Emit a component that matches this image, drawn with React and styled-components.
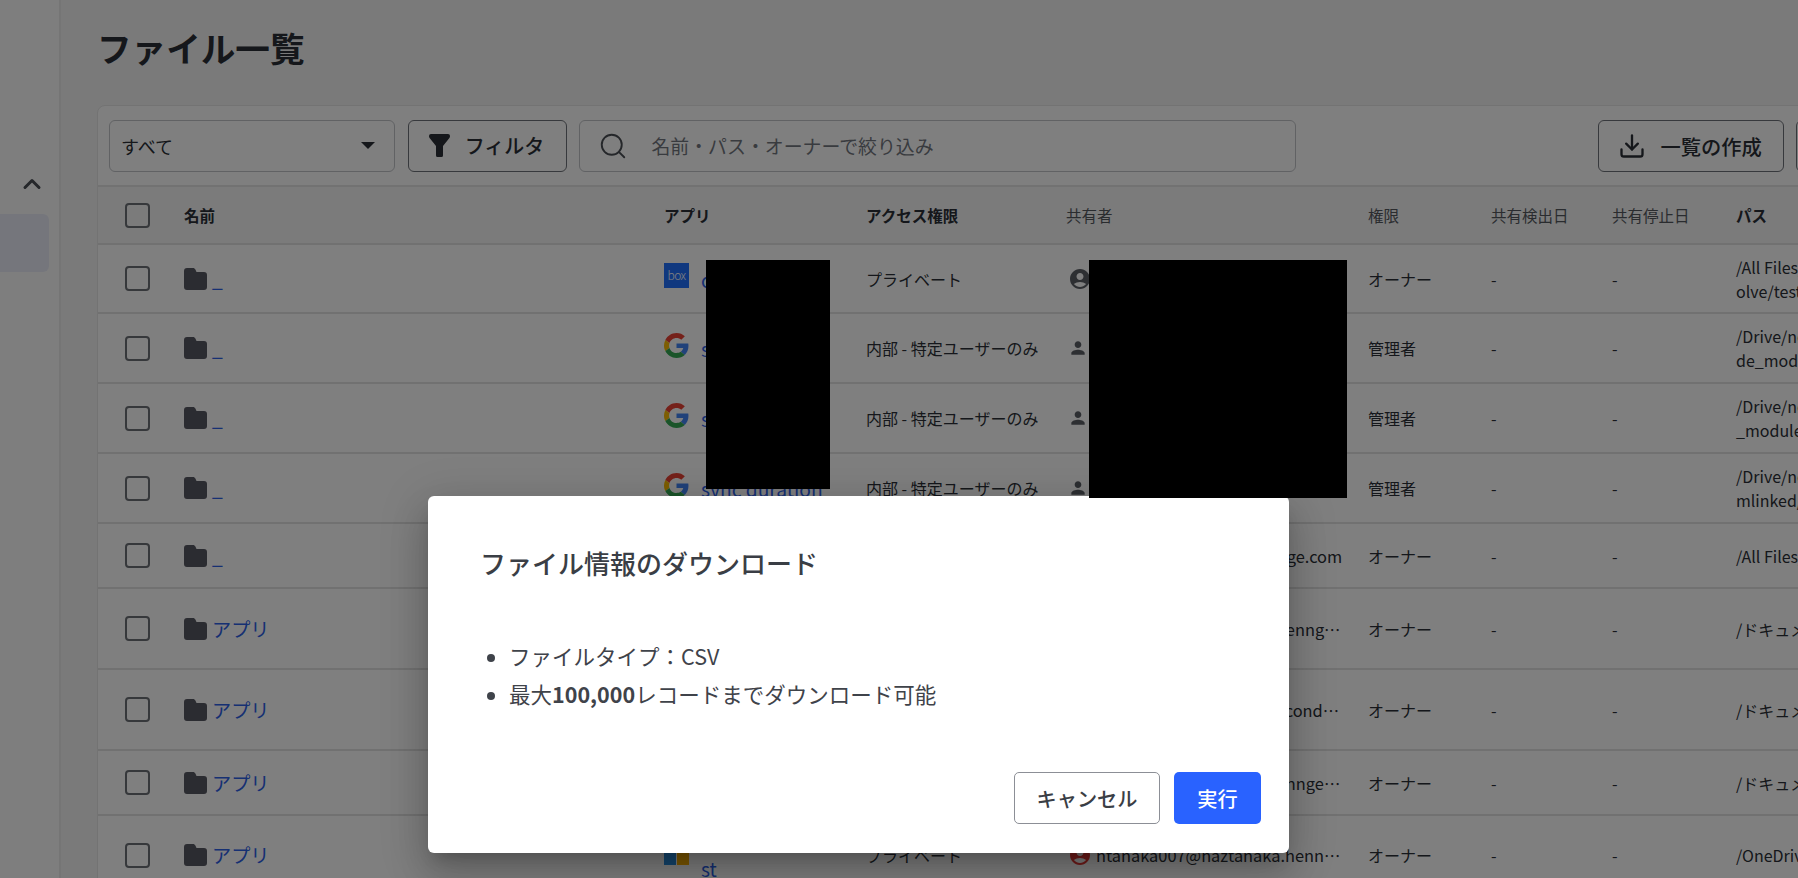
import React from "react";
import styled, { createGlobalStyle } from "styled-components";
import { ChevronUp, Search, Download } from "lucide-react";

const GlobalStyle = createGlobalStyle`
  html, body {
    margin: 0;
    height: 100%;
    overflow: hidden;
    background: #f5f5f5;
    font-family: "Noto Sans CJK JP", "Noto Sans", sans-serif;
    color: #2b2f36;
  }
  * { box-sizing: border-box; }
`;

const Page = styled.div`
  position: relative;
  display: flex;
  width: 1798px;
  height: 878px;
  overflow: hidden;
`;

const Sidebar = styled.aside`
  flex: 0 0 61px;
  padding-top: 170px;
  background: #fdfdfd;
  border-right: 2px solid #ebebeb;
`;

const Collapse = styled.div`
  display: flex;
  justify-content: center;
  padding-left: 5px;
  height: 44px;
  color: #4a4e55;
`;

const SideItem = styled.div`
  width: 49px;
  height: 58px;
  background: #eaedf8;
  border-radius: 0 6px 6px 0;
`;

const Main = styled.main`
  flex: 1;
  min-width: 0;
  padding: 0 0 0 36px;
`;

const Title = styled.h1`
  margin: 0;
  height: 105px;
  padding: 23px 0 0;
  font-size: 34.6px;
  line-height: 48px;
  font-weight: 700;
`;

const Card = styled.section`
  width: 1800px;
  background: #fff;
  border: 1px solid #e6e6e6;
  border-radius: 8px 0 0 0;
`;

const Toolbar = styled.div`
  display: flex;
  align-items: center;
  height: 81px;
  padding: 0 0 0 11px;
  border-bottom: 2px solid #e4e4e4;
`;

const SelectBox = styled.div`
  display: flex;
  align-items: center;
  justify-content: space-between;
  width: 286px;
  height: 52px;
  padding: 0 19px 0 11px;
  margin-right: 13px;
  border: 1.5px solid #c2c4c9;
  border-radius: 6px;
  font-size: 18px;
`;

const Caret = styled.span`
  width: 0;
  height: 0;
  border-left: 7px solid transparent;
  border-right: 7px solid transparent;
  border-top: 7px solid #2b2f36;
`;

const ToolButton = styled.button`
  display: flex;
  align-items: center;
  gap: ${(p) => p.$gap}px;
  width: ${(p) => p.$width}px;
  height: 52px;
  margin-right: ${(p) => p.$mr}px;
  padding: 0 0 0 ${(p) => p.$pl}px;
  background: #fff;
  border: 1.5px solid #6f737a;
  border-radius: 6px;
  font-family: inherit;
  font-size: ${(p) => p.$size}px;
  font-weight: 500;
  color: #2b2f36;
`;

const SearchBox = styled.div`
  display: flex;
  align-items: center;
  gap: 23px;
  width: 718px;
  height: 52px;
  margin-right: 302px;
  padding-left: 18px;
  border: 1.5px solid #c2c4c9;
  border-radius: 6px;
  color: #73777e;
  font-size: 18.9px;
  svg {
    flex: none;
    color: #4a4e55;
  }
`;

const Row = styled.div`
  display: grid;
  grid-template-columns: 86px 480px 202px 200px 302px 123px 121px 124px 400px;
  align-items: center;
  height: ${(p) => p.$h}px;
  background: ${(p) => (p.$head ? "#f6f6f6" : "#fff")};
  border-bottom: 2px solid #e2e2e2;
  font-size: 16px;
`;

const CheckCell = styled.div`
  padding-left: 27px;
  display: flex;
`;

const Check = styled.span`
  width: 25px;
  height: 25px;
  border: 2.5px solid #6c7076;
  border-radius: 4px;
`;

const HeadCell = styled.div`
  font-size: 15.5px;
  font-weight: ${(p) => (p.$bold ? 700 : 400)};
  color: ${(p) => (p.$bold ? "#2b2f36" : "#55595f")};
  white-space: nowrap;
`;

const NameCell = styled.div`
  display: flex;
  align-items: center;
  gap: 5px;
`;

const FileLink = styled.a`
  color: #2c60e6;
  font-size: 19.2px;
  line-height: 26px;
  white-space: pre-line;
`;

const AppCell = styled.div`
  display: flex;
  align-items: center;
  gap: 12px;
  ${FileLink} {
    margin-top: 2px;
  }
`;

const AppLogo = styled.span`
  flex: 0 0 25px;
  display: flex;
  width: 25px;
  height: 25px;
  margin-bottom: 6px;
`;

const BoxLogo = styled(AppLogo)`
  align-items: center;
  justify-content: center;
  background: #2070ff;
  color: #fff;
  font-size: 12px;
  font-weight: 300;
  padding-bottom: 3px;
  letter-spacing: -0.5px;
`;

const MsLogo = styled(AppLogo)`
  display: grid;
  grid-template-columns: 1fr 1fr;
  grid-template-rows: 1fr 1fr;
  gap: 1.5px;
  span:nth-child(1) { background: #e64a19; }
  span:nth-child(2) { background: #4caf50; }
  span:nth-child(3) { background: #2b8fe0; }
  span:nth-child(4) { background: #ffb300; }
`;

const SharerCell = styled.div`
  display: flex;
  align-items: center;
  gap: 4px;
  padding-left: 2px;
  min-width: 0;
`;

const SharerIcon = styled.span`
  flex: 0 0 20px;
  display: flex;
  justify-content: center;
  color: ${(p) => p.$color};
`;

const Email = styled.span`
  width: 251px;
  font-size: 16.4px;
  white-space: nowrap;
  overflow: hidden;
  text-overflow: ellipsis;
`;

const PathCell = styled.div`
  line-height: 24px;
  white-space: pre-line;
`;

const Overlay = styled.div`
  position: absolute;
  inset: 0;
  z-index: 10;
  display: flex;
  align-items: flex-start;
  padding: 496px 0 0 428px;
  background: rgba(0, 0, 0, 0.5);
`;

const Dialog = styled.div`
  display: flex;
  flex-direction: column;
  width: 861px;
  height: 357px;
  padding: 47px 28px 29px 52px;
  background: #fff;
  border-radius: 6px;
  box-shadow: 0 11px 15px -7px rgba(0, 0, 0, 0.2),
    0 24px 38px 3px rgba(0, 0, 0, 0.14), 0 9px 46px 8px rgba(0, 0, 0, 0.12);
`;

const DialogTitle = styled.h2`
  margin: 0;
  font-size: 26px;
  line-height: 40px;
  font-weight: 500;
  color: #3a3e45;
`;

const InfoList = styled.ul`
  margin: 54px 0 0;
  padding: 0 0 0 29px;
  font-size: 21.5px;
  line-height: 37.5px;
  color: #3f434a;
  li::marker { font-size: 20px; }
  b { font-weight: 700; }
`;

const DialogActions = styled.div`
  display: flex;
  justify-content: flex-end;
  gap: 14px;
  margin-top: auto;
`;

const DialogButton = styled.button`
  width: ${(p) => p.$width}px;
  height: 52px;
  padding: 0;
  border-radius: 5px;
  border: ${(p) => (p.$primary ? "none" : "1.5px solid #8c8f96")};
  background: ${(p) => (p.$primary ? "#2962ff" : "#fff")};
  color: ${(p) => (p.$primary ? "#fff" : "#3a3e45")};
  font-family: inherit;
  font-size: 20.2px;
  font-weight: 500;
`;

const Redaction = styled.div`
  position: absolute;
  z-index: 20;
  left: ${(p) => p.$left}px;
  top: 260px;
  width: ${(p) => p.$width}px;
  height: ${(p) => p.$height}px;
  background: #000;
`;

const FolderIcon = () => (
  <svg width="23" height="22" viewBox="0 0 23 22" fill="#575862">
    <path d="M3 0h6c1 0 2 .6 2.4 1.5L12.5 4H20a3 3 0 0 1 3 3v12a3 3 0 0 1-3 3H3a3 3 0 0 1-3-3V3a3 3 0 0 1 3-3z" />
  </svg>
);

const GoogleLogo = () => (
  <AppLogo>
    <svg width="25" height="25" viewBox="0 0 48 48">
      <path fill="#EA4335" d="M24 9.5c3.54 0 6.71 1.22 9.21 3.6l6.85-6.85C35.9 2.38 30.47 0 24 0 14.62 0 6.51 5.38 2.56 13.22l7.98 6.19C12.43 13.72 17.74 9.5 24 9.5z" />
      <path fill="#4285F4" d="M46.98 24.55c0-1.57-.15-3.09-.38-4.55H24v9.02h12.94c-.58 2.96-2.26 5.48-4.78 7.18l7.73 6c4.51-4.18 7.09-10.36 7.09-17.65z" />
      <path fill="#FBBC05" d="M10.53 28.59c-.48-1.45-.76-2.99-.76-4.59s.27-3.14.76-4.59l-7.98-6.19C.92 16.46 0 20.12 0 24c0 3.88.92 7.54 2.56 10.78l7.97-6.19z" />
      <path fill="#34A853" d="M24 48c6.48 0 11.93-2.13 15.89-5.81l-7.73-6c-2.15 1.45-4.92 2.3-8.16 2.3-6.26 0-11.57-4.22-13.47-9.91l-7.98 6.19C6.51 42.62 14.62 48 24 48z" />
    </svg>
  </AppLogo>
);

const AccountIcon = ({ color }) => (
  <SharerIcon $color={color}>
    <svg width="24" height="24" viewBox="0 0 24 24" fill="currentColor" style={{ flex: "none" }}>
      <path d="M12 2C6.48 2 2 6.48 2 12s4.48 10 10 10 10-4.48 10-10S17.52 2 12 2zm0 4c1.93 0 3.5 1.57 3.5 3.5S13.93 13 12 13s-3.5-1.57-3.5-3.5S10.07 6 12 6zm0 14c-2.03 0-4.43-.82-6.14-2.88C7.55 15.8 9.68 15 12 15s4.45.8 6.14 2.12C16.43 19.18 14.03 20 12 20z" />
    </svg>
  </SharerIcon>
);

const PersonIcon = () => (
  <SharerIcon $color="#5a5e65">
    <svg width="20" height="20" viewBox="0 0 24 24" fill="currentColor">
      <path d="M12 12c2.21 0 4-1.79 4-4s-1.79-4-4-4-4 1.79-4 4 1.79 4 4 4zm0 2c-2.67 0-8 1.34-8 4v2h16v-2c0-2.66-5.33-4-8-4z" />
    </svg>
  </SharerIcon>
);

const FilterIcon = () => (
  <svg width="21" height="23" viewBox="0 0 21 23" fill="#2b2f36" style={{ flex: "none" }}>
    <path d="M0 2a2 2 0 0 1 2-2h17a2 2 0 0 1 2 2c0 1-.5 2-1 2.5L14 12v9.5a1.5 1.5 0 0 1-1.5 1.5h-4A1.5 1.5 0 0 1 7 21.5V12L1 4.5C.5 4 0 3 0 2z" />
  </svg>
);

const ROWS = [
  { h: 69, name: "_", logo: "box", app: "c", access: "プライベート", sharer: "account", email: "", role: "オーナー", path: "/All Files/dev/res\nolve/test/sample" },
  { h: 70, name: "_", logo: "google", app: "s", access: "内部 - 特定ユーザーのみ", sharer: "person", email: "", role: "管理者", path: "/Drive/node/no\nde_modules/sample" },
  { h: 70, name: "_", logo: "google", app: "s", access: "内部 - 特定ユーザーのみ", sharer: "person", email: "", role: "管理者", path: "/Drive/node/no\n_modules/sample" },
  { h: 70, name: "_", logo: "google", app: "sync duration", access: "内部 - 特定ユーザーのみ", sharer: "person", email: "", role: "管理者", path: "/Drive/node/no\nmlinked/sample" },
  { h: 65, name: "_", logo: "", app: "", access: "", sharer: "account", email: "tanaka@haztanaka.hennge.com", role: "オーナー", path: "/All Files/dev" },
  { h: 81, name: "アプリ", logo: "", app: "", access: "", sharer: "account", email: "ntanaka07@haztanaka.hennge.com", role: "オーナー", path: "/ドキュメント/アプリ" },
  { h: 81, name: "アプリ", logo: "", app: "", access: "", sharer: "account", email: "ntanaka0@haztanaka-secondary.com", role: "オーナー", path: "/ドキュメント/アプリ" },
  { h: 65, name: "アプリ", logo: "", app: "", access: "", sharer: "account", email: "ntanaka7@haztanaka.henngedemo.com", role: "オーナー", path: "/ドキュメント/アプリ" },
  { h: 80, name: "アプリ", logo: "ms", app: "tenant te\nst", access: "プライベート", sharer: "red", email: "ntanaka007@haztanaka.hennge.com", role: "オーナー", path: "/OneDrive/アプリ" },
];

const renderLogo = (logo) => {
  if (logo === "box") return <BoxLogo>box</BoxLogo>;
  if (logo === "google") return <GoogleLogo />;
  if (logo === "ms") {
    return (
      <MsLogo>
        <span />
        <span />
        <span />
        <span />
      </MsLogo>
    );
  }
  return null;
};

const renderSharer = (sharer) => {
  if (sharer === "account") return <AccountIcon color="#5a5e65" />;
  if (sharer === "red") return <AccountIcon color="#e53935" />;
  if (sharer === "person") return <PersonIcon />;
  return null;
};

export default function App() {
  return (
    <Page>
      <GlobalStyle />
      <Sidebar>
        <Collapse>
          <ChevronUp size={28} strokeWidth={2.6} />
        </Collapse>
        <SideItem />
      </Sidebar>
      <Main>
        <Title>ファイル一覧</Title>
        <Card>
          <Toolbar>
            <SelectBox>
              すべて
              <Caret />
            </SelectBox>
            <ToolButton $width={160} $gap={15} $pl={20} $mr={12} $size={20}>
              <FilterIcon />
              フィルタ
            </ToolButton>
            <SearchBox>
              <Search size={30} strokeWidth={1.5} />
              名前・パス・オーナーで絞り込み
            </SearchBox>
            <ToolButton $width={186} $gap={14} $pl={19} $mr={12} $size={20.3}>
              <Download size={28} strokeWidth={2} />
              一覧の作成
            </ToolButton>
            <ToolButton $width={100} $gap={0} $pl={0} $mr={0} $size={20} />
          </Toolbar>
          <Row $h={58} $head>
            <CheckCell>
              <Check />
            </CheckCell>
            <HeadCell $bold>名前</HeadCell>
            <HeadCell $bold>アプリ</HeadCell>
            <HeadCell $bold>アクセス権限</HeadCell>
            <HeadCell>共有者</HeadCell>
            <HeadCell>権限</HeadCell>
            <HeadCell>共有検出日</HeadCell>
            <HeadCell>共有停止日</HeadCell>
            <HeadCell $bold>パス</HeadCell>
          </Row>
          {ROWS.map((row, i) => (
            <Row key={i} $h={row.h}>
              <CheckCell>
                <Check />
              </CheckCell>
              <NameCell>
                <FolderIcon />
                <FileLink>{row.name}</FileLink>
              </NameCell>
              <AppCell>
                {renderLogo(row.logo)}
                <FileLink>{row.app}</FileLink>
              </AppCell>
              <div>{row.access}</div>
              <SharerCell>
                {renderSharer(row.sharer)}
                <Email>{row.email}</Email>
              </SharerCell>
              <div>{row.role}</div>
              <div>-</div>
              <div>-</div>
              <PathCell>{row.path}</PathCell>
            </Row>
          ))}
        </Card>
      </Main>
      <Overlay>
        <Dialog>
          <DialogTitle>ファイル情報のダウンロード</DialogTitle>
          <InfoList>
            <li>ファイルタイプ：CSV</li>
            <li>
              最大<b>100,000</b>レコードまでダウンロード可能
            </li>
          </InfoList>
          <DialogActions>
            <DialogButton $width={146}>キャンセル</DialogButton>
            <DialogButton $width={87} $primary>
              実行
            </DialogButton>
          </DialogActions>
        </Dialog>
      </Overlay>
      <Redaction $left={706} $width={124} $height={229} />
      <Redaction $left={1089} $width={258} $height={238} />
    </Page>
  );
}
